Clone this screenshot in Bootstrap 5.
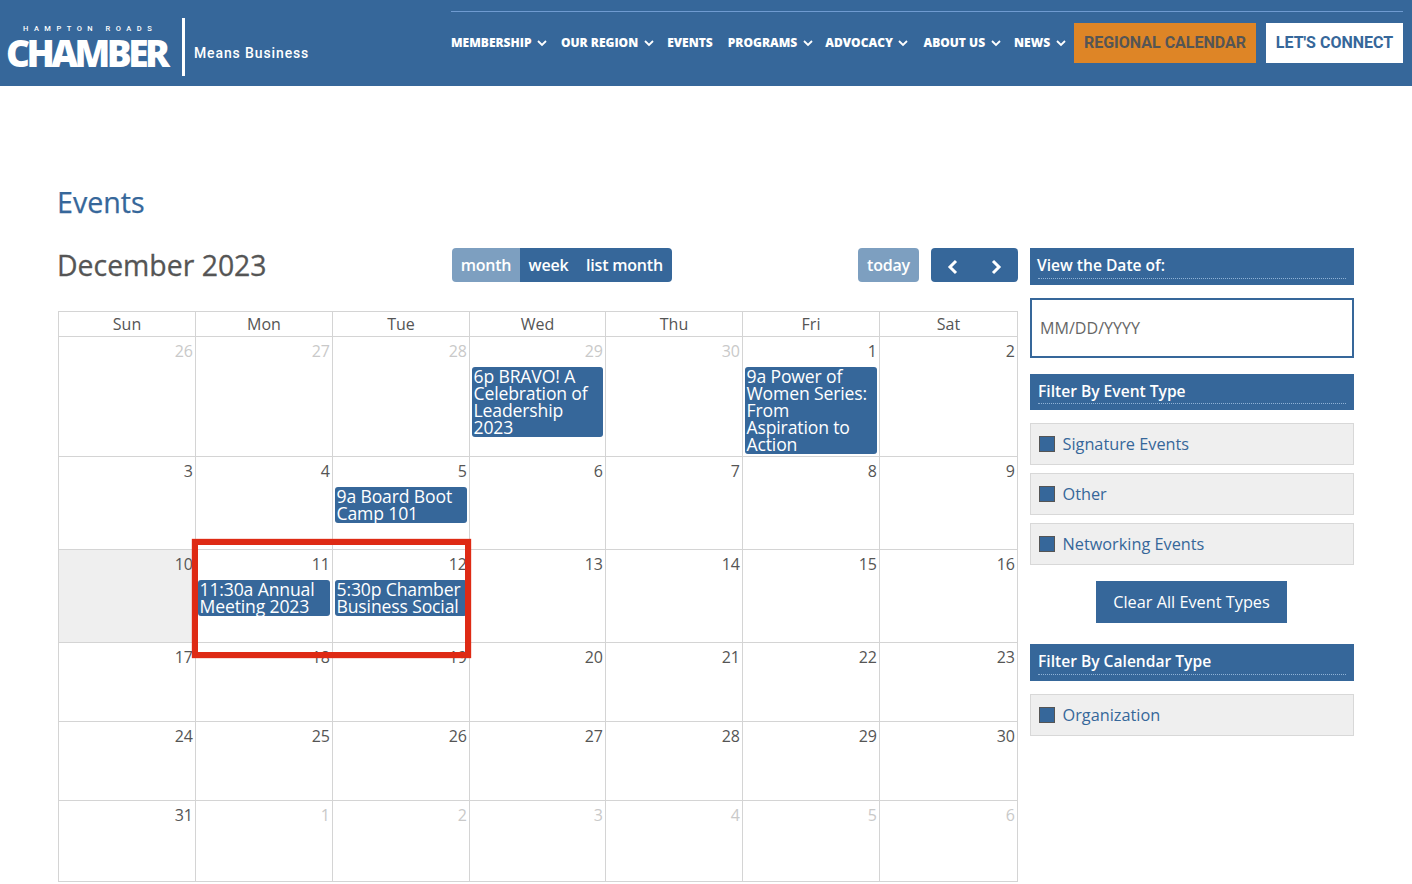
<!DOCTYPE html>
<html lang="en"><head><meta charset="utf-8"><title>Events</title>
<link href="https://cdn.jsdelivr.net/npm/bootstrap@5.3.0/dist/css/bootstrap.min.css" rel="stylesheet">
<style>
html,body{overflow:hidden;height:884px}
body{font-family:"Open Sans",sans-serif;color:#555;background:#fff;position:relative}
.site-head{height:86px;background:#36679a;padding:0 9px 0 8px}
.brand-wrap{width:443px;height:86px;color:#fff;text-decoration:none}
.brand-mark{width:163px;padding-top:24px}
.brand-top{display:block;font:500 7.5px/9px Roboto,sans-serif;letter-spacing:5.5px;padding-left:15px;white-space:nowrap}
.brand-big{display:block;font:800 37px/32px "Open Sans",sans-serif;letter-spacing:-3.55px;white-space:nowrap;margin:4px 0 0 -2px}
.brand-rule{width:3px;height:58px;background:#fff;margin:18px 0 0 11px}
.brand-tag{font:500 14px/1 Roboto,sans-serif;letter-spacing:.88px;margin:46px 0 0 9px}
.head-right{width:952px;padding-top:11px}
.head-line{height:1px;background:#6f9bd1}
.menu-row{height:40px;margin-top:11px}
.menu-link{font:800 12px/40px "Open Sans",sans-serif;color:#fff;text-decoration:none;white-space:nowrap;padding:0}
.menu-link svg{width:10px;height:7px;margin-left:5.5px;vertical-align:0}
.m1{margin-right:14px}.m2{margin-right:13.5px}.m3{margin-right:15px}.m4{margin-right:12.5px}.m5{margin-right:15px}.m6{margin-right:13.5px}
.cta{font:700 16px/40px Roboto,sans-serif;height:40px;padding:0;border:0;border-radius:0;text-align:center}
.cta-orange{width:182px;background:#de8526;color:#555;margin:0 10px 0 auto}
.cta-white{width:137px;background:#fff;color:#36679a}
.page-body{padding:0 0 0 58px;position:relative}
.page-title{font:500 28.6px/36px "Open Sans",sans-serif;color:#36679a;margin:98px 0 28px -1px;height:36px;-webkit-text-stroke:.25px #36679a}
.cal-col{width:960px}
.side-col{width:324px;margin-left:12px}
.tool-row{height:34px;margin-bottom:29px;position:relative}
.cal-title{font:500 28.4px/34px "Open Sans",sans-serif;color:#555;margin:0 0 0 -1px;width:395px;white-space:nowrap;-webkit-text-stroke:.3px #555}
.fc-btn{font:600 16px/32px "Open Sans",sans-serif;background:#36679a;color:#fff;border:0;height:34px;padding:0;border-radius:4px;letter-spacing:-.2px}
.fc-btn:hover{background:#36679a;color:#fff}
.fc-on,.fc-on:hover{background:#7d9fc0}
.btn-group>.fc-btn{margin-left:0!important}
.w-month{width:68px}.w-week{width:57px}.w-list{width:95px}.w-today{width:61px}.w-arrow{width:43.5px}
.view-gap{width:186px}.nav-gap{width:12px}
.cal-table{table-layout:fixed;width:960px;border-collapse:collapse;margin:0;color:#555}
.cal-table th,.cal-table td{border:1px solid #d4d4d4;padding:0;box-shadow:none;background:transparent;color:#555}
.cal-table th{font:400 16px/24px "Open Sans",sans-serif;text-align:center;height:25px;width:137px}
.cal-table th:nth-child(4){width:136px}
.cal-table th:nth-child(7){width:138px}
.cal-table td{vertical-align:top;font-size:16px}
.day-num{display:block;text-align:right;font:400 16px/22px "Open Sans",sans-serif;padding:3px 2px 0 0;height:30px}
.other-month .day-num{color:#c9c9c9}
.cal-table td.today-cell{background:#efefef}
.r1{height:120px}.r2,.r3{height:93px}.r4,.r5{height:79px}.r6{height:81px}
.cal-evt{display:block;background:#36679a;color:#fff;font:400 17.6px/17px "Open Sans",sans-serif;margin:0 2px;border-radius:3px;padding:1px 1px 1px 1.5px;text-decoration:none;letter-spacing:-.15px}
.side-head{background:#36679a;color:#fff;font:600 15.6px/20px "Open Sans",sans-serif;padding:7px 8px 0;height:37px;margin:0}
.side-head span{display:block;border-bottom:1px dotted #8fb2d6;height:24px}
.side-head-a span{text-indent:-1px}
.side-head-b{height:36px;margin-top:16px}
.side-head-b span{height:23px}
.date-input{height:60px;border:2px solid #36679a;border-radius:0;margin-top:13px;font:400 16.1px/1 "Open Sans",sans-serif;padding:0 8px;color:#555}
.date-input::placeholder{color:#666}
.filter-item{height:42px;background:#efefef;border:1px solid #d8d8d8;margin-top:8px;padding:0 8px;color:#36679a;font:400 16.3px/38px "Open Sans",sans-serif}
.filter-first{margin-top:13px}
.filter-box{width:16px;height:16px;background:#36679a;border:1px solid #555;margin-right:7.5px;flex:none}
.clear-btn{display:block;width:191px;height:42px;margin:16px 0 21px 66px;background:#36679a;color:#fff;border:0;border-radius:0;font:500 16.3px/42px "Open Sans",sans-serif;padding:0}
.clear-btn:hover{background:#36679a;color:#fff}
.mark-box{position:absolute;left:192px;top:539px;width:279px;height:119px;border:6px solid #de2a14;box-shadow:0 0 1px #de2a14;pointer-events:none}
</style></head>
<body>
<header class="site-head d-flex">
  <a class="brand-wrap d-flex" href="#">
    <span class="brand-mark"><span class="brand-top">HAMPTON ROADS</span><span class="brand-big">CHAMBER</span></span>
    <span class="brand-rule"></span>
    <span class="brand-tag">Means Business</span>
  </a>
  <div class="head-right">
    <div class="head-line"></div>
    <nav class="menu-row d-flex align-items-center">
      <a class="menu-link m1" href="#">MEMBERSHIP<svg viewBox="0 0 10 7" fill="none" stroke="#fff" stroke-width="1.8"><path d="M1 1l4 4 4-4"/></svg></a>
      <a class="menu-link m2" href="#">OUR REGION<svg viewBox="0 0 10 7" fill="none" stroke="#fff" stroke-width="1.8"><path d="M1 1l4 4 4-4"/></svg></a>
      <a class="menu-link m3" href="#">EVENTS</a>
      <a class="menu-link m4" href="#">PROGRAMS<svg viewBox="0 0 10 7" fill="none" stroke="#fff" stroke-width="1.8"><path d="M1 1l4 4 4-4"/></svg></a>
      <a class="menu-link m5" href="#">ADVOCACY<svg viewBox="0 0 10 7" fill="none" stroke="#fff" stroke-width="1.8"><path d="M1 1l4 4 4-4"/></svg></a>
      <a class="menu-link m6" href="#">ABOUT US<svg viewBox="0 0 10 7" fill="none" stroke="#fff" stroke-width="1.8"><path d="M1 1l4 4 4-4"/></svg></a>
      <a class="menu-link" href="#">NEWS<svg viewBox="0 0 10 7" fill="none" stroke="#fff" stroke-width="1.8"><path d="M1 1l4 4 4-4"/></svg></a>
      <a class="btn cta cta-orange" href="#">REGIONAL CALENDAR</a>
      <a class="btn cta cta-white" href="#">LET'S CONNECT</a>
    </nav>
  </div>
</header>
<main class="page-body">
  <h1 class="page-title">Events</h1>
  <div class="d-flex align-items-start">
    <section class="cal-col">
      <div class="tool-row d-flex">
        <h2 class="cal-title">December 2023</h2>
        <div class="btn-group">
          <button class="btn fc-btn fc-on w-month">month</button>
          <button class="btn fc-btn w-week">week</button>
          <button class="btn fc-btn w-list">list month</button>
        </div>
        <div class="view-gap"></div>
        <button class="btn fc-btn fc-on w-today">today</button>
        <div class="nav-gap"></div>
        <div class="btn-group">
          <button class="btn fc-btn w-arrow" aria-label="prev"><svg width="12" height="16" viewBox="0 0 12 16" fill="none" stroke="#fff" stroke-width="3"><path d="M9 2L3 8l6 6"/></svg></button>
          <button class="btn fc-btn w-arrow" aria-label="next"><svg width="12" height="16" viewBox="0 0 12 16" fill="none" stroke="#fff" stroke-width="3"><path d="M3 2l6 6-6 6"/></svg></button>
        </div>
      </div>
      <table class="table cal-table">
        <thead><tr><th>Sun</th><th>Mon</th><th>Tue</th><th>Wed</th><th>Thu</th><th>Fri</th><th>Sat</th></tr></thead>
        <tbody>
          <tr class="r1">
            <td class="other-month"><span class="day-num">26</span></td>
            <td class="other-month"><span class="day-num">27</span></td>
            <td class="other-month"><span class="day-num">28</span></td>
            <td class="other-month"><span class="day-num">29</span><a class="cal-evt" href="#">6p BRAVO! A Celebration of Leadership 2023</a></td>
            <td class="other-month"><span class="day-num">30</span></td>
            <td><span class="day-num">1</span><a class="cal-evt" href="#">9a Power of Women Series: From<br>Aspiration to Action</a></td>
            <td><span class="day-num">2</span></td>
          </tr>
          <tr class="r2">
            <td><span class="day-num">3</span></td>
            <td><span class="day-num">4</span></td>
            <td><span class="day-num">5</span><a class="cal-evt" href="#">9a Board Boot Camp 101</a></td>
            <td><span class="day-num">6</span></td>
            <td><span class="day-num">7</span></td>
            <td><span class="day-num">8</span></td>
            <td><span class="day-num">9</span></td>
          </tr>
          <tr class="r3">
            <td class="today-cell"><span class="day-num">10</span></td>
            <td><span class="day-num">11</span><a class="cal-evt" href="#">11:30a Annual Meeting 2023</a></td>
            <td><span class="day-num">12</span><a class="cal-evt" href="#">5:30p Chamber Business Social</a></td>
            <td><span class="day-num">13</span></td>
            <td><span class="day-num">14</span></td>
            <td><span class="day-num">15</span></td>
            <td><span class="day-num">16</span></td>
          </tr>
          <tr class="r4">
            <td><span class="day-num">17</span></td><td><span class="day-num">18</span></td><td><span class="day-num">19</span></td><td><span class="day-num">20</span></td><td><span class="day-num">21</span></td><td><span class="day-num">22</span></td><td><span class="day-num">23</span></td>
          </tr>
          <tr class="r5">
            <td><span class="day-num">24</span></td><td><span class="day-num">25</span></td><td><span class="day-num">26</span></td><td><span class="day-num">27</span></td><td><span class="day-num">28</span></td><td><span class="day-num">29</span></td><td><span class="day-num">30</span></td>
          </tr>
          <tr class="r6">
            <td><span class="day-num">31</span></td>
            <td class="other-month"><span class="day-num">1</span></td><td class="other-month"><span class="day-num">2</span></td><td class="other-month"><span class="day-num">3</span></td><td class="other-month"><span class="day-num">4</span></td><td class="other-month"><span class="day-num">5</span></td><td class="other-month"><span class="day-num">6</span></td>
          </tr>
        </tbody>
      </table>
    </section>
    <aside class="side-col">
      <h3 class="side-head side-head-a"><span>View the Date of:</span></h3>
      <input class="form-control date-input" type="text" placeholder="MM/DD/YYYY">
      <h3 class="side-head side-head-b"><span>Filter By Event Type</span></h3>
      <div class="filter-item filter-first d-flex align-items-center"><span class="filter-box"></span>Signature Events</div>
      <div class="filter-item d-flex align-items-center"><span class="filter-box"></span>Other</div>
      <div class="filter-item d-flex align-items-center"><span class="filter-box"></span>Networking Events</div>
      <button class="btn clear-btn">Clear All Event Types</button>
      <h3 class="side-head"><span>Filter By Calendar Type</span></h3>
      <div class="filter-item filter-first d-flex align-items-center"><span class="filter-box"></span>Organization</div>
    </aside>
  </div>
</main>
<div class="mark-box"></div>
<script src="https://cdn.jsdelivr.net/npm/bootstrap@5.3.0/dist/js/bootstrap.bundle.min.js"></script>
</body></html>
